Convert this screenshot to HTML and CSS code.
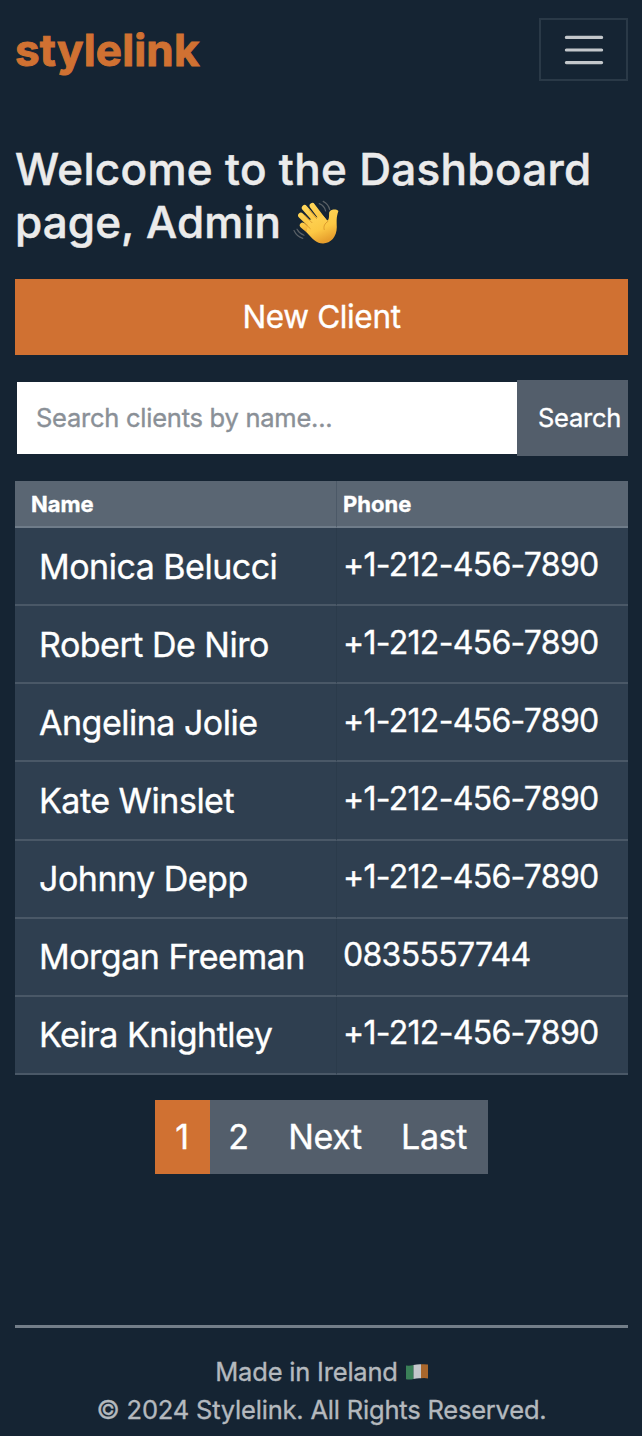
FILE: index.html
```html
<!DOCTYPE html>
<html lang="en">
<head>
<meta charset="utf-8">
<title>stylelink</title>
<link rel="stylesheet" href="styles.css">
</head>
<body>
<header class="navbar">
  <a class="brand">stylelink</a>
  <button class="toggler" aria-label="Menu">
    <svg width="60" height="60" viewBox="0 0 30 30" fill="none" stroke="#c3c7cb" stroke-width="1.6" stroke-linecap="round"><path d="M6.200 8.700h17.600M6.200 15h17.600M6.200 21.300h17.600"/></svg>
  </button>
</header>
<main class="content">
  <h1 class="title"><span class="title-line">Welcome to the Dashboard</span><br><span class="title-line second">page, Admin</span>
    <svg class="wave" viewBox="0 0 48 48" width="48" height="48">
      <defs><linearGradient id="skin" x1="0" y1="0" x2=".4" y2="1"><stop offset="0" stop-color="#ffd85c"/><stop offset=".65" stop-color="#fcc844"/><stop offset="1" stop-color="#e79f2d"/></linearGradient></defs>
      <g fill="none" stroke="url(#skin)" stroke-linecap="round">
        <path stroke-width="5.6" d="M12.6 7.8L25 22M20.4 5.8L31 20M8.9 15.4L22 28M10.6 25.4L21 34"/>
      </g>
      <path fill="url(#skin)" d="M30.800 15.500L35.400 20.600C37.200 19.600 37 17 37.100 13.500C37.200 9.500 43.500 8.300 46.400 11C44 18 44.800 22 44.800 27C44.800 37 38.500 43.500 31 43.400C24.500 43.300 21 39.500 14.500 32L17 20Z"/>
      <g fill="none" stroke="#d9962b" stroke-width=".9" stroke-linecap="round"><path d="M17.500 10L24.500 18.500M12.400 15L20 22.700M12.500 23.200L18.200 28.500M36 21.300C32.500 23.500 31.300 26.500 32.200 29.500"/></g>
      <g fill="none" stroke="#596066" stroke-width="1.2" stroke-linecap="round"><path d="M27.200 3.600Q32.500 5.500 33.600 11M31.200 1.400Q36.600 4.300 37.700 9.700M2 30.500Q4.700 36.500 10.800 38.300M5 29.200Q7.200 33.400 12 35.200"/></g>
    </svg>
  </h1>
  <button class="new-client">New Client</button>
  <form class="search">
    <input class="search-input" type="text" placeholder="Search clients by name...">
    <button class="search-button" type="button">Search</button>
  </form>
  <table class="clients">
    <thead><tr><th>Name</th><th>Phone</th></tr></thead>
    <tbody>
      <tr><td>Monica Belucci</td><td>+1-212-456-7890</td></tr>
      <tr><td>Robert De Niro</td><td>+1-212-456-7890</td></tr>
      <tr><td>Angelina Jolie</td><td>+1-212-456-7890</td></tr>
      <tr><td>Kate Winslet</td><td>+1-212-456-7890</td></tr>
      <tr><td>Johnny Depp</td><td>+1-212-456-7890</td></tr>
      <tr><td>Morgan Freeman</td><td>0835557744</td></tr>
      <tr><td>Keira Knightley</td><td>+1-212-456-7890</td></tr>
    </tbody>
  </table>
  <nav class="pages"><a class="page current">1</a><a class="page two">2</a><a class="page next">Next</a><a class="page last">Last</a></nav>
</main>
<footer class="footer">
  <p class="line">Made in Ireland <svg class="flag" width="22" height="16" viewBox="0 0 22 16"><path fill="#3a8058" d="M0 1.500Q4 2 7.500 1V15Q4 16 0 15.200Z"/><path fill="#c5c8cc" d="M7.500 1Q11 .2 15 .3V14.300Q11 14 7.500 15Z"/><path fill="#a9672c" d="M15 .3Q19 0 22 .6V14.500Q19 13.800 15 14.300Z"/></svg></p>
  <p class="line">© 2024 Stylelink. All Rights Reserved.</p>
</footer>
</body>
</html>
```

FILE: styles.css
```css
* { box-sizing: border-box; }
body {
  margin: 0;
  min-height: 1436px;
  padding: 0 14px 0 15px;
  display: flex;
  flex-direction: column;
  background: #152433;
  color: #fff;
  font-family: Inter, "Liberation Sans", sans-serif;
  -webkit-text-stroke: .35px currentColor;
}
button, input { font-family: inherit; border: 0; border-radius: 0; }
.navbar {
  height: 99px;
  display: flex;
  justify-content: space-between;
  align-items: center;
}
.brand { color: #d07132; font-size: 44px; font-weight: 700; letter-spacing: .15px; -webkit-text-stroke-width: 1px; }
.toggler {
  width: 89px;
  height: 63px;
  padding: 0;
  display: flex;
  align-items: center;
  justify-content: center;
  border: 2px solid #2a3947;
  background: transparent;
}
.content { display: flex; flex-direction: column; }
.title {
  margin: 44px 0 0;
  height: 136px;
  color: #ebebeb;
  font-size: 44px;
  line-height: 53px;
  font-weight: 500;
  letter-spacing: .32px;
  white-space: nowrap;
  -webkit-text-stroke-width: .5px;
}
.second { letter-spacing: .1px; }
.wave { vertical-align: -10px; margin-left: -1px; }
.new-client {
  height: 76px;
  padding-bottom: 2px;
  background: #d07132;
  color: #fff;
  font-size: 31.500px;
  letter-spacing: -.35px;
}
.search { display: flex; height: 76px; margin-top: 25px; }
.search-input {
  flex: 1;
  min-width: 0;
  margin: 2px 0 2px 2px;
  padding: 0 19px 1px;
  background: #fff;
  font-size: 25.500px;
  letter-spacing: -.25px;
}
.search-input::placeholder { color: #8a9097; opacity: 1; }
.search-button {
  width: 111px;
  padding: 0 0 1px 14px;
  background: #535e6b;
  color: #fff;
  font-size: 25.500px;
  letter-spacing: -.25px;
}
.clients {
  margin-top: 25px;
  width: 613px;
  table-layout: fixed;
  border-collapse: separate;
  border-spacing: 0;
}
.clients th {
  height: 47px;
  padding: 0 0 0 16px;
  background: #5a6673;
  border-bottom: 2px solid #6f7c89;
  font-size: 22px;
  line-height: 26px;
  font-weight: 700;
  text-align: left;
}
.clients th:first-child { width: 322px; border-right: 1px solid #4c5967; }
.clients th:last-child { padding-left: 6px; }
.clients td {
  height: 78.140px;
  padding: 0 0 3px 6px;
  background: #2f3f50;
  border-bottom: 2px solid #4a5867;
  font-size: 32px;
  line-height: 40px;
  letter-spacing: -.7px;
}
.clients td:first-child { padding: 1px 0 0 24px; border-right: 1px solid #2b3b4b; font-size: 34px; letter-spacing: -.5px; }
.pages { display: flex; width: 333px; align-self: center; height: 74px; margin: 25px 1px 0 0; font-size: 34px; letter-spacing: -.4px; }
.page { display: flex; align-items: center; justify-content: center; padding-bottom: 1px; background: #535e6b; }
.current { width: 55px; background: #d07132; }
.two { width: 58px; }
.next { width: 115px; }
.last { width: 105px; padding-right: 2px; }
.footer {
  margin-top: auto;
  height: 111px;
  padding-top: 25px;
  border-top: 3px solid #737e89;
  color: #b4b9be;
  text-align: center;
}
.line { margin: 0; font-size: 25.500px; line-height: 38px; letter-spacing: -.2px; }
.flag { vertical-align: 1px; margin-left: 1px; }
```
